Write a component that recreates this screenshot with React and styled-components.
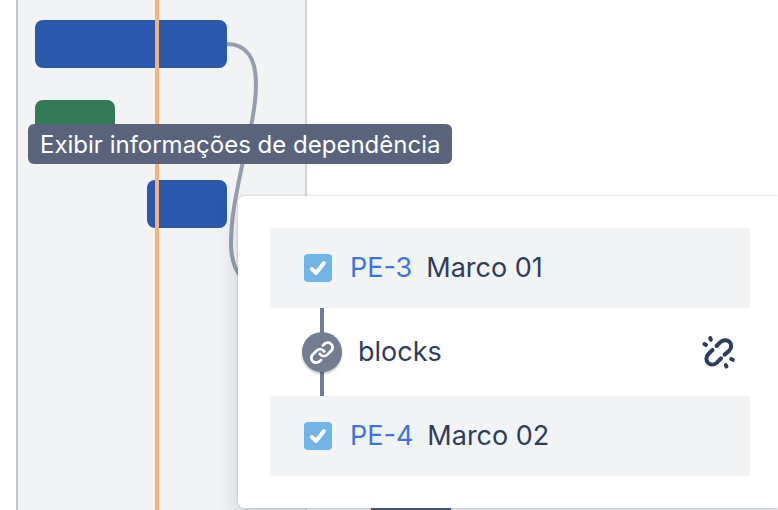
import React from "react";
import styled, { createGlobalStyle } from "styled-components";

const issues = {
    source: { key: "PE-3", summary: "Marco 01" },
    target: { key: "PE-4", summary: "Marco 02" },
};

const LinkIcon = () => (
    <svg width="32" height="32" viewBox="0 0 24 24" fill="currentColor" aria-hidden="true">
        <path d="M12.856 5.457l-.937.92a1.002 1.002 0 000 1.437 1.047 1.047 0 001.463 0l.984-.966c.967-.95 2.542-1.135 3.602-.288a2.54 2.54 0 01.203 3.81l-2.903 2.852a2.646 2.646 0 01-3.696 0l-1.11-1.09L9 13.57l1.108 1.089c1.822 1.788 4.802 1.788 6.622 0l2.905-2.852a4.558 4.558 0 00-.357-6.82c-1.893-1.517-4.695-1.226-6.422.47" />
        <path d="M11.144 19.543l.937-.92a1.002 1.002 0 000-1.437 1.047 1.047 0 00-1.462 0l-.985.966c-.967.95-2.542 1.135-3.602.288a2.54 2.54 0 01-.203-3.81l2.903-2.852a2.646 2.646 0 013.696 0l1.11 1.09L15 11.43l-1.108-1.089c-1.822-1.788-4.802-1.788-6.622 0l-2.905 2.852a4.558 4.558 0 00.357 6.82c1.893 1.517 4.695 1.226 6.422-.47" />
    </svg>
);

const UnlinkIcon = () => (
    <svg width="36" height="36" viewBox="0 0 36 36" fill="none" stroke="currentColor" strokeWidth="4" strokeLinecap="round" aria-hidden="true">
        <path d="M15.5 12L19.3 8.2C21.9 5.6 26 5.5 28.4 7.8C30.8 10.2 30.7 14.2 28.2 16.7L23.6 20.6" />
        <path d="M11.6 15.8L7.4 20C4.8 22.6 4.7 26.6 7.1 28.9C9.5 31.2 13.4 31.1 15.9 28.6L20 24.3" />
        <path d="M3.4 10.1L5 10.8M9.2 4L9.9 5.6M30.2 25L31.8 25.8M24.8 31.1L25.5 32.5" />
    </svg>
);

const IssueRow = ({ issue }) => (
    <Issue>
        <TickBox>
            <TickInput type="checkbox" defaultChecked aria-label={issue.key} />
            <Tick viewBox="0 0 28 28" aria-hidden="true">
                <path d="M8 15L12 19L20 9" />
            </Tick>
        </TickBox>
        <IssueKey href={"#" + issue.key}>{issue.key}</IssueKey>
        <Summary>{issue.summary}</Summary>
    </Issue>
);

const App = () => {
    return (
        <Roadmap>
            <GlobalStyle />
            <Sprint>
                <Bar $width={192} />
                <Bar $width={80} $color="#357857" />
                <Bar $width={80} $start={112} />
            </Sprint>
            <LowerBar />
            <Dependency width="300" height="300" viewBox="0 0 300 300" aria-hidden="true">
                <path d="M227 44C247 44 256 59 256 84C256 110 248 140 242 166C236 195 231 218 231 243C231 260 235 272 244 280" />
            </Dependency>
            <Today />
            <Tooltip role="tooltip">Exibir informações de dependência</Tooltip>
            <Popup role="dialog" aria-label="Dependência">
                <IssueRow issue={issues.source} />
                <Relation>
                    <Connector>
                        <Badge>
                            <LinkIcon />
                        </Badge>
                    </Connector>
                    <RelationName>blocks</RelationName>
                    <UnlinkButton type="button" aria-label="Remover dependência">
                        <UnlinkIcon />
                    </UnlinkButton>
                </Relation>
                <IssueRow issue={issues.target} />
            </Popup>
        </Roadmap>
    );
};

const GlobalStyle = createGlobalStyle`
  * {
    box-sizing: border-box;
  }
  body {
    margin: 0;
    background: #ffffff;
    color: #2e3d5c;
    font: 400 27px/40px Inter, sans-serif;
  }
`;

const Roadmap = styled.main`
  position: relative;
  display: flex;
  min-height: 100vh;
  padding-left: 16px;
  overflow: hidden;
`;

const Sprint = styled.section`
  display: flex;
  flex-direction: column;
  gap: 32px;
  width: 291px;
  padding: 20px 17px;
  background: #f1f3f5;
  border-left: 2px solid #c1c7d0;
  border-right: 2px solid #d3d7dd;
`;

const Bar = styled.div`
  width: ${({ $width }) => $width}px;
  height: 48px;
  margin-left: ${({ $start }) => $start || 0}px;
  border-radius: 8px;
  background: ${({ $color }) => $color || "#2c58ac"};
`;

const LowerBar = styled.div`
  position: absolute;
  left: 371px;
  top: 500px;
  width: 80px;
  height: 48px;
  background: #505f79;
`;

const Dependency = styled.svg`
  position: absolute;
  left: 0;
  top: 0;
  fill: none;
  stroke: #949eae;
  stroke-width: 4px;
`;

const Today = styled.div`
  position: absolute;
  left: 155px;
  top: 0;
  bottom: 0;
  width: 4px;
  background: #f7b27c;
`;

const Tooltip = styled.div`
  position: absolute;
  left: 28px;
  top: 124px;
  height: 40px;
  padding: 1px 12px 0;
  border-radius: 6px;
  background: #59647c;
  color: #ffffff;
  font-size: 24px;
  white-space: nowrap;
`;

const Popup = styled.div`
  position: absolute;
  left: 238px;
  top: 196px;
  width: 544px;
  padding: 32px;
  border-radius: 6px;
  background: #ffffff;
  box-shadow: 0 16px 24px rgba(9, 30, 66, 0.15), 0 0 2px rgba(9, 30, 66, 0.31);
`;

const Issue = styled.div`
  display: flex;
  align-items: center;
  height: 80px;
  padding: 0 34px;
  background: #f1f3f5;
`;

const TickBox = styled.span`
  display: grid;
  width: 28px;
  height: 28px;
  margin-right: 18px;
`;

const TickInput = styled.input`
  grid-area: 1 / 1;
  appearance: none;
  width: 28px;
  height: 28px;
  margin: 0;
  border-radius: 4px;
  background: #71b4e6;
`;

const Tick = styled.svg`
  grid-area: 1 / 1;
  fill: none;
  stroke: #ffffff;
  stroke-width: 4px;
  stroke-linecap: round;
  stroke-linejoin: round;
  pointer-events: none;
`;

const IssueKey = styled.a`
  margin-right: 14px;
  color: #3c76e2;
  text-decoration: none;
`;

const Summary = styled.span`
  white-space: nowrap;
`;

const Relation = styled.div`
  display: flex;
  align-items: center;
  height: 88px;
  padding: 0 13px 0 32px;
`;

const Connector = styled.div`
  display: flex;
  align-items: center;
  justify-content: center;
  width: 40px;
  height: 88px;
  margin-right: 16px;
  background: linear-gradient(#727d92, #727d92) center / 4px 100% no-repeat;
`;

const Badge = styled.span`
  display: grid;
  place-items: center;
  width: 40px;
  height: 40px;
  border-radius: 50%;
  background: #727d92;
  color: #ffffff;
  box-shadow: 0 2px 2px rgba(9, 30, 66, 0.25);
`;

const RelationName = styled.span`
  flex: 1;
`;

const UnlinkButton = styled.button`
  display: grid;
  place-items: center;
  width: 36px;
  height: 36px;
  padding: 0;
  border: 0;
  background: none;
  color: #2e3d5c;
  cursor: pointer;
`;

export default App;
